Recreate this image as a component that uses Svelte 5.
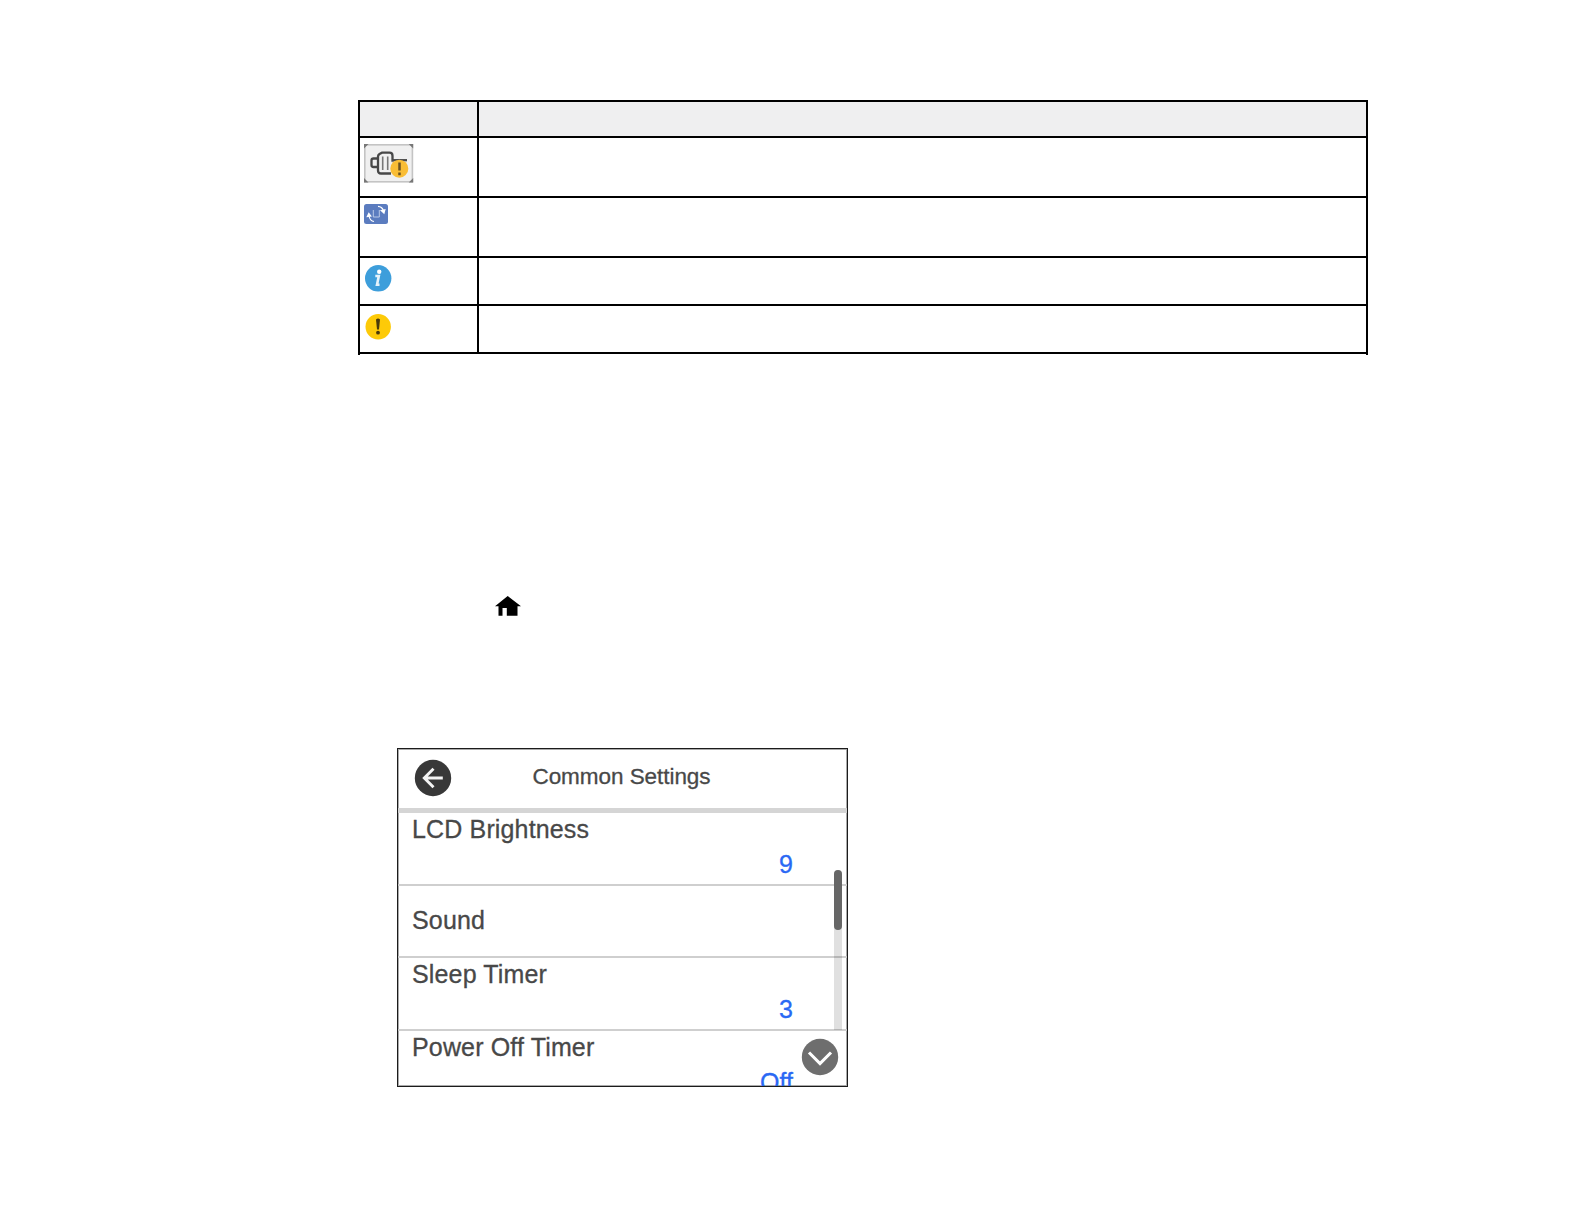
<script lang="ts">
	type Row = 'maintenance' | 'rotate' | 'info' | 'warning';
	type Setting = { label: string; value?: string };

	const rows: Row[] = ['maintenance', 'rotate', 'info', 'warning'];

	const settings: Setting[] = [
		{ label: 'LCD Brightness', value: '9' },
		{ label: 'Sound' },
		{ label: 'Sleep Timer', value: '3' },
		{ label: 'Power Off Timer', value: 'Off' }
	];
</script>

<main class="page">
	<div class="icon-table">
		<div class="cell head"></div>
		<div class="cell head"></div>
		{#each rows as row}
			<div class="cell">
				{#if row === 'maintenance'}
					<svg class="maintenance" width="50" height="39" viewBox="0 0 50 39">
						<rect x="0.8" y="0.8" width="47.6" height="37" fill="#f0f0f0" stroke="#c4c4c4" stroke-width="1.6" />
						<path d="M0 4.500V0h4.500zM44.700 0H49.200v4.500zM0 34v4.600h4.500zM49.200 34v4.600h-4.500z" fill="#777" />
						<g fill="none" stroke="#484848" stroke-width="2.3">
							<path d="M13 14.500H9.500q-2 0-2 2v4.500q0 2 2 2H13" />
							<path d="M27 29.500H17q-3 0-3-3V23M14 23V12.500q0-1.500 1.500-2.500L18 8.700h7.500q3 0 3 3v6" />
							<path d="M29 16.200h14" />
							<path d="M18.700 12.500v13.500M23.700 12.500v13.500" stroke-width="1.600" stroke="#777" />
						</g>
						<circle cx="35.300" cy="24.700" r="9" fill="#f9bd35" />
						<path d="M35.500 18.500v8M35.500 28.500v2.800" stroke="#6b5220" stroke-width="2.500" />
					</svg>
				{:else if row === 'rotate'}
					<svg class="rotate" width="24" height="20" viewBox="0 0 24 20">
						<rect width="24" height="20" rx="2.500" fill="#5b7cbf" />
						<path d="M9.300 6v7h6V6" fill="none" stroke="#b9c8e8" stroke-width="1" />
						<path d="M14 2.300q4 .3 5.300 4M10 17.500q-4-.5-5-5.500" fill="none" stroke="#fff" stroke-width="1.200" />
						<path d="M16 6.300l5.700-1.300-1.400 5.300zM2.300 13.300l2.400-5 3.200 4.200z" fill="#fff" />
					</svg>
				{:else if row === 'info'}
					<svg class="round" width="28" height="28" viewBox="0 0 28 28">
						<circle cx="14.200" cy="14.300" r="13.200" fill="#3d9edb" />
						<circle cx="15.200" cy="7.700" r="2.200" fill="#fff" />
						<path d="M11.300 12h3.500l-1.800 8.800h2.500" fill="none" stroke="#e6f3fb" stroke-width="2.600" />
					</svg>
				{:else}
					<svg class="round" width="28" height="28" viewBox="0 0 28 28">
						<circle cx="14.200" cy="14.700" r="12.700" fill="#fdca08" />
						<path d="M12 7.500q2-1.800 4 0l-1 10h-2z" fill="#49390a" />
						<circle cx="14" cy="20.700" r="1.900" fill="#49390a" />
					</svg>
				{/if}
			</div>
			<div class="cell"></div>
		{/each}
	</div>

	<svg class="home" width="26" height="20" viewBox="0 0 26 20">
		<path d="M12.700 0L26 10.300H22.500V19.700H11.800V12H7.500V19.700H3.500V10.300H0z" fill="#000" />
	</svg>

	<section class="lcd">
		<header>
			<svg class="back" width="38" height="38" viewBox="0 0 38 38">
				<circle cx="19" cy="19" r="18.200" fill="#383838" />
				<path d="M28.800 19H10.500M19.500 9.800L10.300 19l9.200 9.200" fill="none" stroke="#f4f4f4" stroke-width="2.900" />
			</svg>
			<h1>Common Settings</h1>
		</header>
		<ul>
			{#each settings as setting}
				<li class:single={!setting.value}>
					<span class="label">{setting.label}</span>
					{#if setting.value}
						<span class="value">{setting.value}</span>
					{/if}
				</li>
			{/each}
		</ul>
		<div class="track"><div class="thumb"></div></div>
		<svg class="down" width="38" height="38" viewBox="0 0 38 38">
			<circle cx="19" cy="19" r="18.200" fill="#6e6e6e" />
			<path d="M8 14.500L19 25.500l11-11" fill="none" stroke="#fff" stroke-width="3.100" />
		</svg>
	</section>
</main>

<style>
	:global(body) {
		background: #fff;
	}

	.page {
		box-sizing: border-box;
		width: 1584px;
		height: 1224px;
		padding: 100px 0 0 358px;
		font-family: 'Liberation Sans', Arial, sans-serif;
	}

	.icon-table {
		display: grid;
		grid-template-columns: 117px 887px;
		grid-template-rows: 34px 58px 58px 46px 46px;
		gap: 2px;
		box-sizing: border-box;
		width: 1010px;
		height: 255px;
		padding: 2px 2px 0;
		background: linear-gradient(#000, #000) 0 0 / 1010px 254px no-repeat,
			linear-gradient(#000, #000) 0 254px / 2px 1px no-repeat,
			linear-gradient(#000, #000) 1008px 254px / 2px 1px no-repeat;
	}

	.cell {
		background: #fff;
	}

	.head {
		background: #efeff0;
	}

	svg {
		display: block;
	}

	.maintenance,
	.rotate,
	.round {
		margin: 6px 0 0 4px;
	}

	.home {
		margin: 241px 0 0 137px;
	}

	.lcd {
		position: relative;
		box-sizing: border-box;
		width: 451px;
		height: 339px;
		margin: 132px 0 0 39px;
		border: 1px solid #1c1c1c;
		box-shadow: inset 0 0 0 1px #aaa;
		overflow: hidden;
		color: #484848;
	}

	header {
		display: grid;
		grid-template-columns: 72px 1fr 74px;
		box-sizing: border-box;
		height: 64px;
		border-bottom: 5px solid #d5d5d5;
	}

	.back {
		margin: 10px 0 0 16px;
	}

	h1 {
		margin: 15px 0 0;
		font-size: 22.500px;
		line-height: 26px;
		font-weight: 400;
		letter-spacing: -0.050px;
		text-align: center;
		white-space: nowrap;
		-webkit-text-stroke: 0.300px currentColor;
	}

	ul {
		margin: 0;
		padding: 0;
		list-style: none;
	}

	li {
		display: flex;
		flex-direction: column;
		box-sizing: border-box;
		height: 72.700px;
		padding: 1px 54px 0 14px;
		border-bottom: 2px solid #cfcfcf;
		font-size: 25px;
		line-height: 30px;
		-webkit-text-stroke: 0.300px currentColor;
	}

	.single {
		padding-top: 19px;
	}

	.label {
		letter-spacing: 0.150px;
	}

	.value {
		margin-top: 5px;
		color: #2a68f4;
		text-align: right;
	}

	.track {
		position: absolute;
		top: 120.500px;
		right: 5px;
		width: 8px;
		height: 160px;
		background: rgba(0, 0, 0, 0.12);
		border-radius: 4px 4px 0 0;
	}

	.thumb {
		height: 60.500px;
		border-radius: 4px;
		background: #666;
	}

	.down {
		position: absolute;
		right: 8px;
		bottom: 10px;
	}
</style>
